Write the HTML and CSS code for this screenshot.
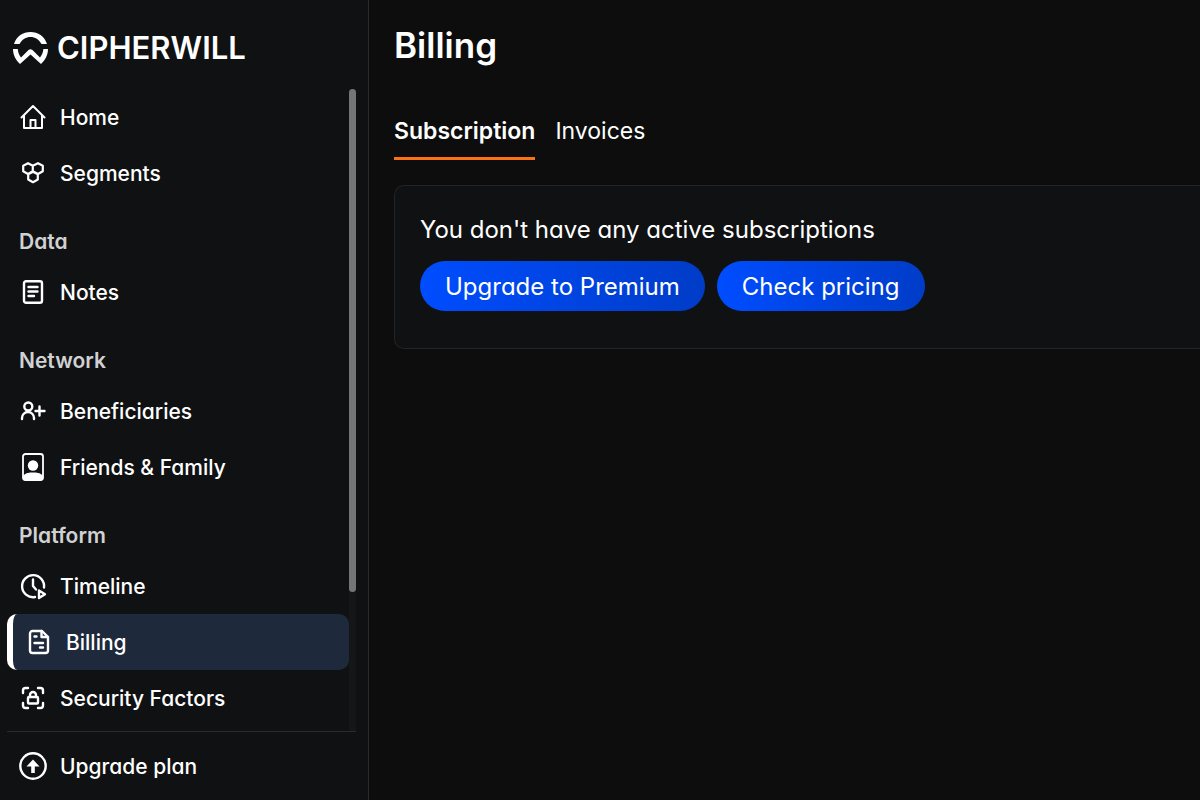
FILE: index.html
```html
<!DOCTYPE html>
<html lang="en">
<head>
<meta charset="utf-8">
<title>Billing - Cipherwill</title>
<link rel="stylesheet" href="styles.css">
</head>
<body>

<div class="app">
  <aside class="sidebar">
    <a class="logo" href="#">
      <svg width="36" height="34" viewBox="0 0 36 34" fill="#fff">
        <path d="M1 13C3.500 5 10 1 17.500 1S31.500 5 34 13H28.500C26 8.500 22 6 17.500 6S9 8.500 6.500 13Z"/>
        <path d="M0 18H4.800C5 21 6 24 8 26.500L15.500 19Q17.500 17.300 19.500 19L27 26.500C29 24 30.200 21 30.400 18H35C35 24 32 29.500 28 33L17.500 23.500 7 33C3 29.500 0 24 0 18Z"/>
      </svg>
      <span class="logo-text">CIPHERWILL</span>
    </a>

    <div class="menu">
      <nav class="menu-list">
        <a class="menu-item" href="#">
          <svg class="icon" viewBox="0 0 28 28">
            <path d="M2.500 14.500 14 3l11.500 11.500M5 12.500V25h18V12.500M11.500 25v-8h5v8" stroke-width="2"/>
          </svg>
          Home
        </a>
        <a class="menu-item" href="#">
          <svg class="icon" viewBox="0 0 28 28">
            <path d="M9 4.200l4.800 2.500v5.500L9 15l-4.800-2.800V6.700zM19 4.200l4.800 2.500v5.500L19 15l-5.200-2.800V6.700zM14 12.700l4.800 2.500v5.300L14 23.200l-4.800-2.700v-5.300z" stroke-width="2.200"/>
          </svg>
          Segments
        </a>

        <h2 class="menu-title">Data</h2>
        <a class="menu-item" href="#">
          <svg class="icon" viewBox="0 0 28 28">
            <rect x="5" y="3.200" width="18" height="21.600" rx="2"/>
            <path d="M9.500 9h9M9.500 13.500h9M9.500 18h5.500"/>
          </svg>
          Notes
        </a>

        <h2 class="menu-title">Network</h2>
        <a class="menu-item" href="#">
          <svg class="icon" viewBox="0 0 28 28">
            <circle cx="9.300" cy="9.500" r="4"/>
            <path d="M3 22v-1a6 6 0 0 1 12 0v1M20.500 9.500v9M16.500 14h9"/>
          </svg>
          Beneficiaries
        </a>
        <a class="menu-item" href="#">
          <svg class="icon" viewBox="0 0 28 28">
            <rect x="4" y="1" width="20" height="26" rx="2.500" stroke-width="1.800"/>
            <circle cx="14" cy="12.500" r="5.200" fill="#fff" stroke="none"/>
            <path d="M4 23C7 19.500 10.500 19.500 14 19.500s7 0 10 3.500v2.500a2 2 0 0 1-2 2H6a2 2 0 0 1-2-2z" fill="#fff" stroke="none"/>
          </svg>
          Friends &amp; Family
        </a>

        <h2 class="menu-title">Platform</h2>
        <a class="menu-item" href="#">
          <svg class="icon" viewBox="0 0 28 28">
            <path d="M16 25A11 11 0 1 1 25 15.500M14 7.500V14l3 3.500"/>
            <path d="M20 18.500l6 3.700-6 3.800z"/>
          </svg>
          Timeline
        </a>
        <a class="menu-item active" href="#">
          <svg class="icon" viewBox="0 0 28 28">
            <path d="M17 3H7.500a2.500 2.500 0 0 0-2.500 2.500v17A2.500 2.500 0 0 0 7.500 25h13a2.500 2.500 0 0 0 2.500-2.500V9z"/>
            <path d="M16.500 3v6H23M9.500 8.500h2M9.500 15h8.500M15 19.500h3"/>
          </svg>
          Billing
        </a>
        <a class="menu-item" href="#">
          <svg class="icon" viewBox="0 0 28 28">
            <path d="M4 9V6.500A2.500 2.500 0 0 1 6.500 4H9M19 4h2.500A2.500 2.500 0 0 1 24 6.500V9M24 19v2.500a2.500 2.500 0 0 1-2.500 2.500H19M9 24H6.500A2.500 2.500 0 0 1 4 21.500V19"/>
            <rect x="9" y="13" width="10" height="6.500" rx="1"/>
            <path d="M11 13v-2a3 3 0 0 1 6 0v2"/>
          </svg>
          Security Factors
        </a>
      </nav>
      <div class="scroll-track"><div class="scroll-thumb"></div></div>
    </div>

    <div class="sidebar-footer">
      <a class="menu-item" href="#">
        <svg class="icon" viewBox="0 0 28 28">
          <circle cx="14" cy="14" r="12.700" stroke-width="2.400"/>
          <path d="M12.200 21v-6.500H7.500L14 7.500l6.500 7h-4.700V21z" fill="#fff" stroke="none"/>
        </svg>
        Upgrade plan
      </a>
    </div>
  </aside>

  <main class="content">
    <h1>Billing</h1>
    <nav class="tabs">
      <a class="tab selected" href="#">Subscription</a>
      <a class="tab" href="#">Invoices</a>
    </nav>
    <section class="card">
      <p>You don't have any active subscriptions</p>
      <div class="actions">
        <button type="button">Upgrade to Premium</button>
        <button type="button">Check pricing</button>
      </div>
    </section>
  </main>
</div>

</body>
</html>
```
FILE: styles.css
```css
* {
  box-sizing: border-box;
}

body {
  margin: 0;
  background-color: #0d0d0d;
  color: #fff;
  font-family: Inter, "Liberation Sans", sans-serif;
  font-feature-settings: "cv11"; /* single-storey a */
}

a {
  color: inherit;
  text-decoration: none;
}

.app {
  display: flex;
  height: 100vh;
}

.sidebar {
  display: flex;
  flex-direction: column;
  flex-shrink: 0;
  width: 369px;
  padding: 0 12px 0 7px;
  background-color: #101113;
  border-right: 1px solid #2a2b2d;
}

.logo {
  display: flex;
  align-items: center;
  gap: 8px;
  padding: 31px 6px 24px;
}

.logo-text {
  font-size: 31px;
  font-weight: 600;
  line-height: 34px;
}

.menu {
  display: flex;
  flex: 1;
  min-height: 0;
}

.menu-list {
  flex: 1;
  overflow: hidden;
}

.menu-item {
  display: flex;
  align-items: center;
  gap: 13px;
  height: 56px;
  padding-left: 12px;
  font-size: 21px;
  font-weight: 500;
  border-radius: 10px;
}

.menu-item.active {
  background-color: #1e293b;
  border-left: 6px solid #fff;
}

.icon {
  flex-shrink: 0;
  width: 28px;
  height: 28px;
  fill: none;
  stroke: #fff;
  stroke-width: 2.4;
  stroke-linecap: round;
  stroke-linejoin: round;
}

.menu-title {
  margin: 0;
  padding: 27px 12px 8px;
  color: #d1d1d3;
  font-size: 21px;
  font-weight: 600;
  line-height: 28px;
}

.scroll-track {
  width: 7px;
  background-color: #151618;
}

.scroll-thumb {
  height: 78.4%;
  background-color: #757575;
  border-radius: 4px;
}

.sidebar-footer {
  padding: 6px 0;
  border-top: 1px solid #2a2b2d;
}

.content {
  flex: 1;
  min-width: 0;
  padding: 20px 0 0 25px;
}

h1 {
  margin: 0;
  font-size: 35px;
  font-weight: 600;
  line-height: 50px;
}

.tabs {
  display: flex;
  gap: 20px;
  margin: 40px 0 25px;
}

.tab {
  padding-bottom: 4px;
  font-size: 23px;
  line-height: 43px;
  border-bottom: 3px solid transparent;
}

.tab.selected {
  font-weight: 600;
  border-bottom-color: #f97316;
}

.card {
  padding: 25px 25px 37px;
  background-color: #101113;
  border: 1px solid #232427;
  border-right: none;
  border-radius: 10px 0 0 10px;
}

.card p {
  margin: 0 0 12px;
  font-size: 24px;
  line-height: 38px;
}

.actions {
  display: flex;
  gap: 12px;
}

button {
  height: 50px;
  padding: 0 25px;
  background: linear-gradient(to right, #004dff, #003cc7);
  color: #fff;
  font-family: inherit;
  font-feature-settings: inherit;
  font-size: 24px;
  border: none;
  border-radius: 25px;
  cursor: pointer;
}
```
